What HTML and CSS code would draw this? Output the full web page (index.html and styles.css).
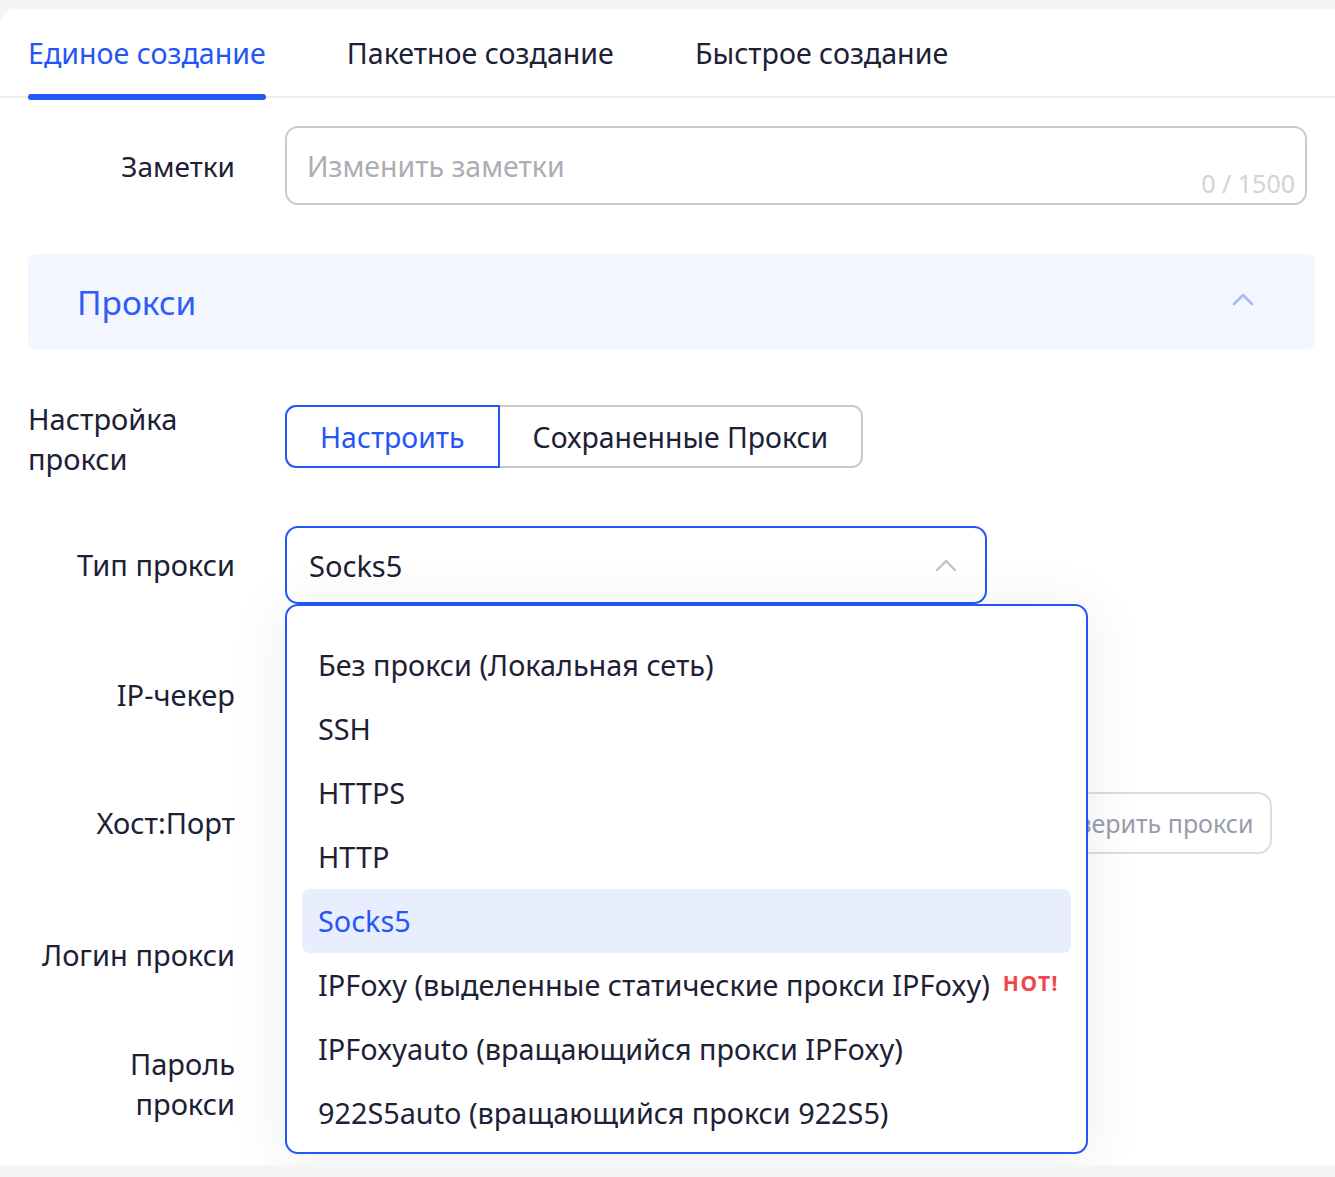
FILE: index.html
```html
<!DOCTYPE html>
<html lang="ru">
<head>
<meta charset="utf-8">
<title>Прокси</title>
<link rel="stylesheet" href="styles.css">
</head>
<body>
<div class="card">
  <div class="tabs">
    <div class="tab active">Единое создание</div>
    <div class="tab">Пакетное создание</div>
    <div class="tab">Быстрое создание</div>
  </div>
  <div class="form">
    <div class="row row-notes">
      <div class="label label-sm">Заметки</div>
      <div class="textarea">
        <span class="placeholder">Изменить заметки</span>
        <span class="counter">0 / 1500</span>
      </div>
    </div>

    <div class="section">
      <span class="section-title">Прокси</span>
      <svg class="section-chevron" width="22" height="14" viewBox="0 0 22 14"><path d="M2 12 L11 3 L20 12" fill="none" stroke="#a8b9f8" stroke-width="2.6" stroke-linecap="round" stroke-linejoin="round"/></svg>
    </div>

    <div class="row row-seg">
      <div class="label label-left">Настройка<br>прокси</div>
      <div class="segmented">
        <div class="seg seg-active">Настроить</div>
        <div class="seg">Сохраненные Прокси</div>
      </div>
    </div>

    <div class="row row-type">
      <div class="label">Тип прокси</div>
      <div class="select-wrap">
        <div class="select">
          <span>Socks5</span>
          <svg width="22" height="14" viewBox="0 0 22 14"><path d="M2 12 L11 3 L20 12" fill="none" stroke="#c0c4cc" stroke-width="2.4" stroke-linecap="round" stroke-linejoin="round"/></svg>
        </div>
        <div class="dropdown">
          <div class="opt">Без прокси (Локальная сеть)</div>
          <div class="opt">SSH</div>
          <div class="opt">HTTPS</div>
          <div class="opt">HTTP</div>
          <div class="opt selected">Socks5</div>
          <div class="opt">IPFoxy (выделенные статические прокси IPFoxy)<span class="hot">HOT!</span></div>
          <div class="opt">IPFoxyauto (вращающийся прокси IPFoxy)</div>
          <div class="opt">922S5auto (вращающийся прокси 922S5)</div>
        </div>
      </div>
    </div>

    <div class="row row-under row-ip">
      <div class="label">IP-чекер</div>
      <div class="input"></div>
    </div>
    <div class="row row-under">
      <div class="label">Хост:Порт</div>
      <div class="host">
        <div class="input grow"></div>
        <div class="check-btn">Проверить прокси</div>
      </div>
    </div>
    <div class="row row-under row-login">
      <div class="label">Логин прокси</div>
      <div class="input"></div>
    </div>
    <div class="row row-under">
      <div class="label">Пароль<br>прокси</div>
      <div class="input"></div>
    </div>
  </div>
</div>
</body>
</html>
```

FILE: styles.css
```css
* { box-sizing: border-box; }
html, body { margin: 0; padding: 0; }
body {
  background: #f5f5f7;
  font-family: "Noto Sans", "Open Sans", sans-serif;
  color: #1d2136;
  padding-top: 9px;
  height: 1177px;
  overflow: hidden;
}
.card {
  background: #fff;
  border-radius: 16px 0 0 0;
  height: 1156px;
  overflow: hidden;
}
.tabs {
  display: flex;
  gap: 81px;
  padding: 0 28px;
  height: 89px;
  border-bottom: 2px solid #ececef;
}
.tab {
  font-size: 28.6px;
  line-height: 40px;
  padding-top: 24px;
  position: relative;
  color: #1d2136;
}
.tab.active { color: #2556f5; }
.tab.active::after {
  content: "";
  position: absolute;
  left: 0; right: 0;
  top: 85px;
  height: 6px;
  border-radius: 3px;
  background: #2356f6;
}
.form {
  padding: 0 20px 0 28px;
  display: flex;
  flex-direction: column;
}
.row {
  display: flex;
  align-items: center;
  gap: 50px;
}
.label {
  width: 207px;
  flex: none;
  text-align: right;
  font-size: 29px;
  line-height: 40px;
}
.label-sm { font-size: 28px; }
.label-left { text-align: left; }
.row-notes { margin-top: 28px; }
.textarea {
  width: 1022px;
  height: 79px;
  border: 2px solid #c9cace;
  border-radius: 13px;
  position: relative;
  padding: 0 20px;
  display: flex;
  align-items: center;
}
.placeholder { font-size: 28.5px; color: #adadb3; }
.counter {
  position: absolute;
  right: 10px;
  bottom: 3px;
  font-size: 25px;
  color: #d3d3d6;
}
.section {
  margin-top: 49px;
  height: 95px;
  width: 1287px;
  background: #f3f6fe;
  border-radius: 8px;
  display: flex;
  align-items: center;
  justify-content: space-between;
  padding: 0 61px 0 49px;
}
.section-title {
  font-size: 33.5px;
  color: #2f5df5;
}
.section-chevron { margin-top: -6px; }
.row-seg { margin-top: 50px; }
.segmented { display: flex; margin-top: -5px; }
.seg {
  height: 63px;
  padding: 0 33px;
  display: flex;
  align-items: center;
  font-size: 28.4px;
  border: 2px solid #c9cace;
  border-left: none;
  border-radius: 0 11px 11px 0;
}
.seg-active {
  color: #2556f5;
  border: 2px solid #2556f5;
  border-radius: 11px 0 0 11px;
}
.row-type { margin-top: 47px; position: relative; z-index: 2; }
.select-wrap { position: relative; }
.select {
  width: 702px;
  height: 78px;
  border: 2px solid #2556f5;
  border-radius: 13px;
  display: flex;
  align-items: center;
  justify-content: space-between;
  padding: 0 28px 0 22px;
  font-size: 29px;
  background: #fff;
}
.dropdown {
  position: absolute;
  left: 0;
  top: 78px;
  width: 803px;
  height: 550px;
  background: #fff;
  border: 2px solid #2556f5;
  border-radius: 13px;
  box-shadow: 0 6px 60px rgba(30, 40, 90, 0.09);
  padding: 27px 15px 5px 15px;
  display: flex;
  flex-direction: column;
}
.opt {
  height: 64px;
  flex: none;
  display: flex;
  align-items: center;
  padding-left: 16px;
  padding-bottom: 2px;
  font-size: 28.8px;
  border-radius: 8px;
  white-space: nowrap;
}
.opt.selected { background: #e8eefd; color: #2556f5; }
.hot {
  color: #f2464a;
  font-weight: 700;
  font-size: 21px;
  letter-spacing: 1.5px;
  margin-left: 13px;
  margin-top: -2px;
}
.row-under { margin-top: 50px; min-height: 78px; }
.row-ip { margin-top: 52px; }
.row-login { margin-top: 54px; }
.input {
  width: 702px;
  height: 62px;
  border: 2px solid #dcdde3;
  border-radius: 13px;
}
.host { display: flex; gap: 16px; align-items: center; }
.input.grow { width: 704px; }
.check-btn {
  height: 62px;
  padding: 0 16px 0 22px;
  border: 2px solid #dcdde3;
  border-radius: 14px;
  display: flex;
  align-items: center;
  font-size: 25px;
  color: #9a9cab;
  white-space: nowrap;
}
```
